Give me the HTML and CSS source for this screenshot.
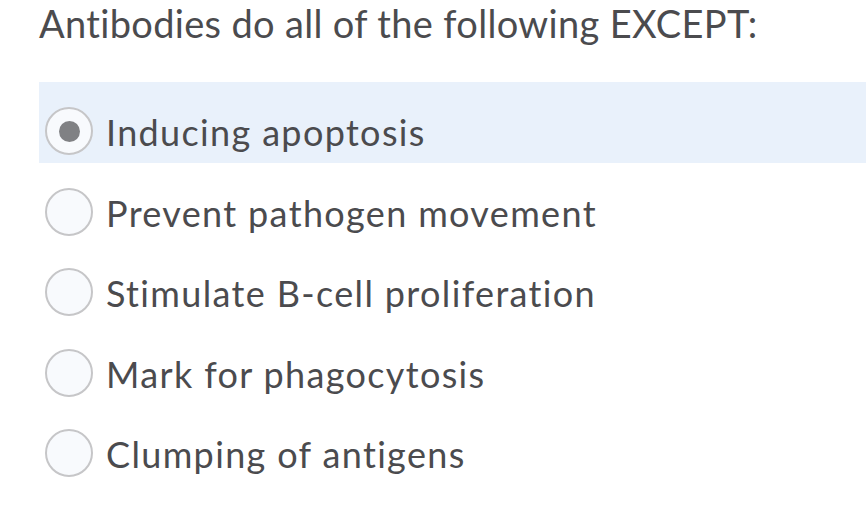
FILE: index.html
```html
<!DOCTYPE html>
<html>
<head>
<meta charset="utf-8">
<link rel="stylesheet" href="styles.css">
</head>
<body>
<div class="question">
  <h1 class="prompt">Antibodies do all of the following EXCEPT:</h1>
  <ul class="options">
    <li class="option selected"><span class="radio"><span class="dot"></span></span><span class="label">Inducing apoptosis</span></li>
    <li class="option"><span class="radio"></span><span class="label">Prevent pathogen movement</span></li>
    <li class="option"><span class="radio"></span><span class="label">Stimulate B-cell proliferation</span></li>
    <li class="option"><span class="radio"></span><span class="label">Mark for phagocytosis</span></li>
    <li class="option"><span class="radio"></span><span class="label">Clumping of antigens</span></li>
  </ul>
</div>
</body>
</html>
```
FILE: styles.css
```css
html, body {
  margin: 0;
  padding: 0;
  background: #ffffff;
}
body {
  font-family: Lato, "Open Sans", sans-serif;
  color: #4b4b4e;
  font-variant-ligatures: none;
}
.question {
  padding-left: 39px;
}
.prompt {
  margin: 0;
  font-size: 38px;
  font-weight: 400;
  line-height: 46px;
  letter-spacing: 0.33px;
  height: 82px;
}
.options {
  list-style: none;
  margin: 0;
  padding: 0;
}
.option {
  box-sizing: border-box;
  display: flex;
  align-items: flex-start;
  height: 80.5px;
  padding-top: 25px;
  padding-left: 6px;
  gap: 13px;
}
.option.selected {
  background: #e9f1fb;
}
.radio {
  box-sizing: border-box;
  width: 48px;
  height: 48px;
  border-radius: 50%;
  border: 2px solid #c6c6c8;
  background: #f8fafd;
  display: flex;
  align-items: center;
  justify-content: center;
  flex: none;
}
.dot {
  width: 21px;
  height: 21px;
  border-radius: 50%;
  background: #808184;
}
.label {
  font-size: 36px;
  line-height: 44px;
  letter-spacing: 1.35px;
  margin-top: 3px;
}
```
